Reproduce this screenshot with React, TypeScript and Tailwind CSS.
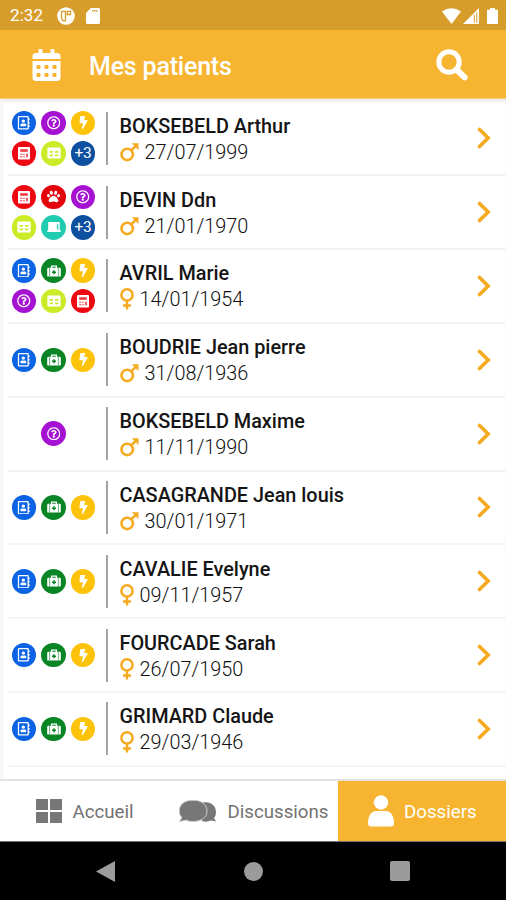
import type { ReactNode } from "react";
import { FaBolt, FaCalendarAlt, FaPaw, FaRegAddressBook, FaRegQuestionCircle } from "react-icons/fa";

type Kind = "contact" | "question" | "bolt" | "calc" | "table" | "more" | "paw" | "laptop" | "kit";

const Calc = () => (
  <svg viewBox="0 0 14 14" className="size-[14px]">
    <rect x="1" y="1" width="12" height="12.4" rx="1" fill="#fff" />
    <path d="M3.2 3.2h7.6v2.6H3.2zM3.2 7.8h2v1h-2zM6.2 7.8h1.6v1H6.2zM3.2 10.2h2v1h-2zM6.2 10.2h1.6v1H6.2zM9.2 7.8h1.6v3.4H9.2z" fill="#ee1018" opacity=".85" />
  </svg>
);
const Table = () => (
  <svg viewBox="0 0 14 12" className="h-[12px] w-[14px]">
    <rect x=".4" y=".6" width="13.2" height="11" rx="1" fill="#fff" />
    <path d="M2.6 4h3.4v1.8H2.6zM8 4h3.4v1.8H8zM2.6 7.4h3.4v1.8H2.6zM8 7.4h3.4v1.8H8z" fill="#cdea26" />
  </svg>
);
const Kit = () => (
  <svg viewBox="0 0 14 12" className="h-[12px] w-[14px]">
    <path d="M4.6 3V1.2h4.8V3" fill="none" stroke="#fff" strokeWidth="1.3" />
    <rect x=".2" y="2.8" width="13.6" height="8.8" rx="1.2" fill="#fff" />
    <path d="M2.6 3v8.4M11.4 3v8.4" stroke="#0a8526" strokeWidth=".6" />
    <path d="M7 5.2v4M5 7.2h4" stroke="#0a8526" strokeWidth="1.5" />
  </svg>
);
const Laptop = () => (
  <svg viewBox="0 0 14 12" className="h-[12px] w-[14px]">
    <path d="M1.2 1.8q0-.8.8-.8h10q.8 0 .8.8v7.600h1V11H.2V9.400h1z" fill="#fff" />
    <path d="M9.800 3.200h1.700v5.400H9.800z" fill="#20cbb0" opacity=".8" />
  </svg>
);

const badges: Record<Kind, { color: string; icon: ReactNode }> = {
  contact: { color: "bg-[#0c64e4]", icon: <FaRegAddressBook className="size-[13.500px]" /> },
  question: { color: "bg-[#a612d2]", icon: <FaRegQuestionCircle className="size-[13.500px]" /> },
  bolt: { color: "bg-[#fdc30b]", icon: <FaBolt className="size-[13px]" /> },
  calc: { color: "bg-[#ee0912]", icon: <Calc /> },
  table: { color: "bg-[#cdea26]", icon: <Table /> },
  more: { color: "bg-[#0d50a0]", icon: <span className="text-[15.500px] leading-none tracking-[-0.3px]">+3</span> },
  paw: { color: "bg-[#e2040a]", icon: <FaPaw className="size-[13px]" /> },
  laptop: { color: "bg-[#20cbb0]", icon: <Laptop /> },
  kit: { color: "bg-[#0a8526]", icon: <Kit /> },
};

const usual: Kind[] = ["contact", "kit", "bolt"];
const patients: { name: string; date: string; male?: boolean; icons: Kind[] }[] = [
  { name: "BOKSEBELD Arthur", date: "27/07/1999", male: true, icons: ["contact", "question", "bolt", "calc", "table", "more"] },
  { name: "DEVIN Ddn", date: "21/01/1970", male: true, icons: ["calc", "paw", "question", "table", "laptop", "more"] },
  { name: "AVRIL Marie", date: "14/01/1954", icons: ["contact", "kit", "bolt", "question", "table", "calc"] },
  { name: "BOUDRIE Jean pierre", date: "31/08/1936", male: true, icons: usual },
  { name: "BOKSEBELD Maxime", date: "11/11/1990", male: true, icons: ["question"] },
  { name: "CASAGRANDE Jean louis", date: "30/01/1971", male: true, icons: usual },
  { name: "CAVALIE Evelyne", date: "09/11/1957", icons: usual },
  { name: "FOURCADE Sarah", date: "26/07/1950", icons: usual },
  { name: "GRIMARD Claude", date: "29/03/1946", icons: usual },
];

const Gender = ({ male }: { male?: boolean }) =>
  male ? (
    <svg viewBox="0 0 19 20" className="mr-[6px] mb-[2px] h-[20px] w-[19px] shrink-0" fill="none" stroke="#f5aa1f" strokeWidth="2.600">
      <circle cx="7.200" cy="12.400" r="5.700" />
      <path d="M11.300 8.400 16 3.600" />
      <path d="M11.800 1.300H18.500V8z" fill="#f5aa1f" stroke="none" />
    </svg>
  ) : (
    <svg viewBox="0 0 14 22" className="mr-[6px] mb-[2px] h-[22px] w-[14px] shrink-0" fill="none" stroke="#f5aa1f" strokeWidth="2.500">
      <circle cx="7" cy="6.900" r="5.600" />
      <path d="M7 12.300V21.600M3 17.400h8" />
    </svg>
  );

export default function App() {
  return (
    <div className="flex h-[900px] w-[506px] flex-col overflow-hidden bg-white font-[Roboto,sans-serif]">
      <div className="flex h-[30px] shrink-0 items-center bg-[#d79d2b] pt-[1px] pl-[10px] text-white">
        <span className="w-[47px] text-[17px] tracking-[0.1px]">2:32</span>
        <svg viewBox="0 0 18 18" className="size-[18px]">
          <circle cx="9" cy="9" r="8.8" fill="#fff" />
          <path d="M4.500 4.300h4v9.600h-2c-1.500-1-2-2-2-4zM10.300 4.300h3.200v3.200h-3.200z" fill="none" stroke="#d79d2b" strokeWidth="1.300" />
        </svg>
        <svg viewBox="0 0 14 16" className="ml-[11px] h-[16px] w-[14px]">
          <path d="M5 0h7.500Q14 0 14 1.500v13q0 1.500-1.500 1.500h-11Q0 16 0 14.500V5z" fill="#fff" />
          <path d="M6 2.700h6" stroke="#d79d2b" strokeWidth="1.500" strokeDasharray="1.3 .5" />
        </svg>
        <div className="ml-auto flex items-center pr-[8px]">
          <svg viewBox="0 0 19 16" className="h-[16px] w-[19px]"><path d="M0 3.400Q9.500-3 19 3.400L9.500 16z" fill="#fff" /></svg>
          <svg viewBox="0 0 16 16" className="ml-[2px] h-[16px] w-[16px]">
            <path d="M0 16 16 0v16z" fill="#fff" />
            <path d="M11.300 6.800v8M13.800 4.500v10.300" stroke="#d79d2b" strokeWidth="1" />
          </svg>
          <svg viewBox="0 0 11 16" className="ml-[8px] h-[16px] w-[11px]"><path d="M3 0h5v1.700h3V16H0V1.700h3z" fill="#fff" /></svg>
        </div>
      </div>

      <header className="flex h-[69px] shrink-0 items-center border-b border-[#f8ce7d] bg-[#f7b431] pt-[1px] pr-[38px] pl-[32px] text-white">
        <FaCalendarAlt className="h-[32px] w-[29px]" />
        <h1 className="ml-[28px] pt-[4px] text-[25px] font-medium tracking-[-0.2px]">Mes patients</h1>
        <svg viewBox="0 0 32 32" className="ml-auto size-[32px]" fill="none" stroke="#fff">
          <circle cx="13" cy="13" r="10.200" strokeWidth="5" />
          <path d="m21 21 7.600 7.400" strokeWidth="6" strokeLinecap="round" />
        </svg>
      </header>

      <main className="h-[680px] shrink-0 overflow-hidden border-l-[3px] border-[#f7f7f7] pt-[3.300px] shadow-[inset_0_3px_2px_#eeeeee]">
        {patients.map((p) => (
          <div key={p.name} className="ml-[5px] flex h-[73.85px] items-center border-b-2 border-[#f4f4f4]">
            <div className="flex w-[91px] shrink-0 flex-wrap justify-center gap-x-[5px] gap-y-[6px]">
              {p.icons.map((kind, i) => (
                <span key={i} className={`flex size-[24.500px] items-center justify-center rounded-full text-white ${badges[kind].color}`}>
                  {badges[kind].icon}
                </span>
              ))}
            </div>
            <div className="ml-[7px] h-[53px] w-[2px] shrink-0 bg-[#a3a3a3]" />
            <div className="ml-[11.500px] pt-[2px] whitespace-nowrap text-[#151515]">
              <div className="h-[27px] text-[19.850px] leading-[27px] font-medium">{p.name}</div>
              <div className="flex h-[26px] items-center text-[19.850px] leading-[26px] font-light text-[#101010]">
                <Gender male={p.male} />
                <span>{p.date}</span>
              </div>
            </div>
            <svg viewBox="0 0 14 22" className="mr-[15px] ml-auto h-[22px] w-[14px]" fill="none" stroke="#f5aa1f" strokeWidth="3.600" strokeLinecap="round">
              <path d="m2.500 2.500 8.700 8.500-8.700 8.500" />
            </svg>
          </div>
        ))}
      </main>

      <nav className="flex h-[63px] shrink-0 border-t-2 border-b border-t-[#e2e2e2] border-b-[#777] text-[18.700px] text-[#727272]">
        <div className="flex w-[169px] items-center pl-[36px]">
          <svg viewBox="0 0 26 24" className="h-[24px] w-[26px]" fill="#777"><path d="M0 0h12v11H0zM14 0h12v11H14zM0 13h12v11H0zM14 13h12v11H14z" /></svg>
          <span className="ml-[10.500px] pt-[2px]">Accueil</span>
        </div>
        <div className="flex w-[169px] items-center pl-[10px]">
          <svg viewBox="0 0 38 23" className="h-[23px] w-[38px] shrink-0" fill="#777">
            <path d="M24 2.500C32 1 37 6 37 12q0 4-2 6l2 3.500-5-1q-5 2-9 .500z" />
            <path d="M14 .200C23 .200 28 5 28 11s-5 10.500-14 10.500q-4 0-7-1.300L.700 21.500l2.100-4Q.200 15 .200 11C.200 5 5 .200 14 .200z" stroke="#ccc" strokeWidth="1" />
          </svg>
          <span className="ml-[10.500px] pt-[2px]">Discussions</span>
        </div>
        <div className="flex flex-1 items-center bg-[#f7b431] pl-[30px] text-white">
          <svg viewBox="0 0 26 32" className="h-[32px] w-[26px]" fill="#fff">
            <circle cx="13" cy="7.500" r="7.200" />
            <path d="M0 28c0-8 4-12 8-12h10c4 0 8 4 8 12q0 3.500-3 3.500H3Q0 31.500 0 28z" />
          </svg>
          <span className="ml-[10px] pt-[2px]">Dossiers</span>
        </div>
      </nav>

      <footer className="flex h-[58px] shrink-0 items-center justify-between bg-black pr-[96px] pl-[96px]">
        <svg viewBox="0 0 19 21" className="h-[21px] w-[19px]" fill="#9b9b9b"><path d="M19 0v21L0 10.500z" /></svg>
        <span className="ml-[1px] size-[19px] rounded-full bg-[#9b9b9b]" />
        <span className="size-[20px] rounded-[2px] bg-[#9b9b9b]" />
      </footer>
    </div>
  );
}
